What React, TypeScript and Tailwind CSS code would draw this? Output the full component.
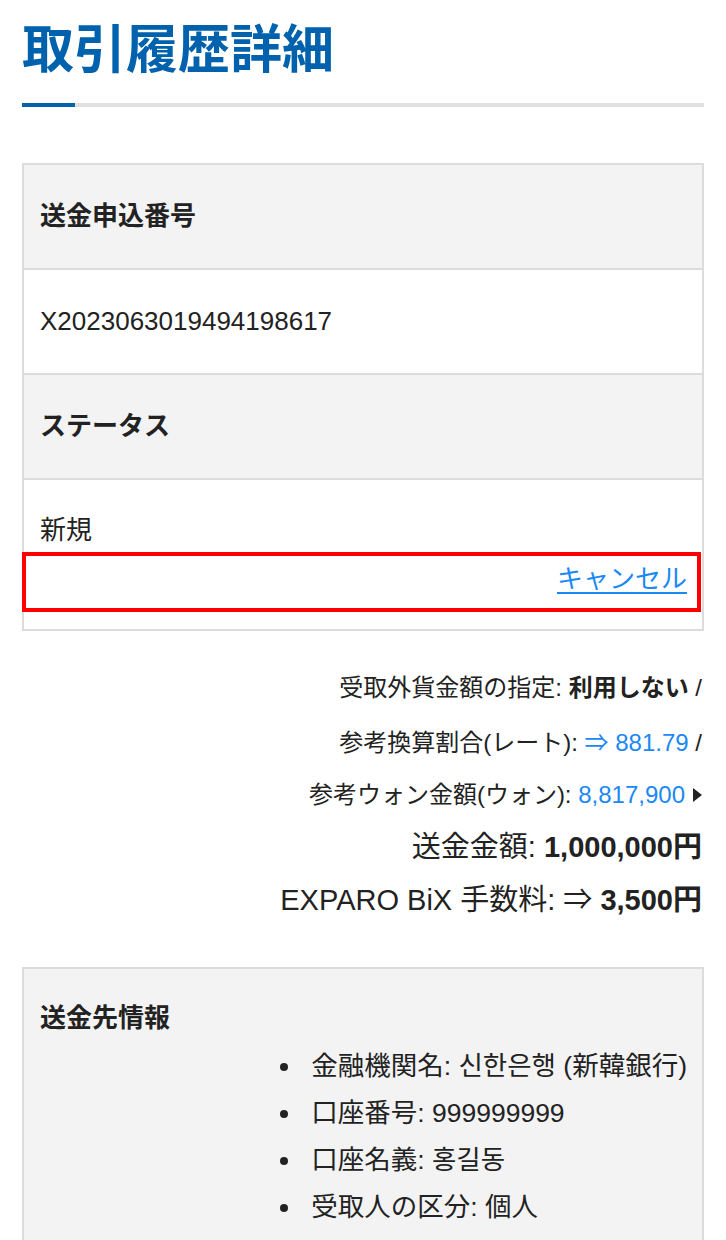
import React from 'react';

const recipient = [
  '金融機関名: 신한은행 (新韓銀行)',
  '口座番号: 999999999',
  '口座名義: 홍길동',
  '受取人の区分: 個人',
  '送金目的: 生活費の援助',
];

const HeaderRow = ({ label }: { label: string }) => (
  <div className="h-[105px] border-b-2 border-[#dcdcdc] bg-[#f3f3f3] flex items-center pl-[16px]">
    <span className="text-[26px] font-bold leading-[39px] text-[#222]">{label}</span>
  </div>
);

const ValueRow = ({ value }: { value: string }) => (
  <div className="h-[105px] border-b-2 border-[#dcdcdc] bg-white flex items-center pl-[16px]">
    <span className="text-[26px] leading-[39px] text-[#222]">{value}</span>
  </div>
);

export default function App() {
  return (
    <div className="min-h-[1240px] bg-white px-[22px] font-['Liberation_Sans','Noto_Sans_CJK_JP',sans-serif] text-[#222]">
      {/* page title */}
      <h1 className="pt-[20px] text-[52px] leading-[51px] font-bold text-[#0062ad] font-['Noto_Sans_CJK_JP',sans-serif]">
        取引履歴詳細
      </h1>
      <div className="mt-[32px] h-[4px] bg-[#e1e1e1] flex">
        <div className="w-[53px] h-full bg-[#0062ad]" />
      </div>

      {/* order card */}
      <div className="mt-[56px] border-x-2 border-t-2 border-[#dcdcdc]">
        <HeaderRow label="送金申込番号" />
        <ValueRow value="X2023063019494198617" />
        <HeaderRow label="ステータス" />
        <div className="border-b-2 border-[#dcdcdc] bg-white pt-[31px] pb-[17px]">
          <div className="pl-[16px] text-[26px] leading-[39px]">新規</div>
          <div className="mt-[2px] -ml-[2px] mr-[1px] h-[60px] border-4 border-[#ff0000] flex items-center justify-end pr-[10px] pb-[6px]">
            <a href="#" className="text-[26px] leading-[39px] text-[#1a88f5] underline underline-offset-[4px]">
              キャンセル
            </a>
          </div>
        </div>
      </div>

      {/* amounts summary */}
      <div className="mt-[29px] pr-[2px] text-right">
        <div className="text-[24px] leading-[55px]">
          受取外貨金額の指定: <span className="font-bold">利用しない</span> /
        </div>
        <div className="text-[24px] leading-[55px]">
          参考換算割合(レート): <span className="text-[#1a88f5]">⇒ 881.79</span> /
        </div>
        <div className="text-[24px] leading-[50px] flex items-center justify-end gap-[8px]">
          <span>
            参考ウォン金額(ウォン): <span className="text-[#1a88f5]">8,817,900</span>
          </span>
          <svg width="9" height="14" viewBox="0 0 9 14">
            <polygon points="0,0 9,7 0,14" fill="#222" />
          </svg>
        </div>
        <div className="text-[29px] leading-[54px]">
          送金金額: <span className="font-bold">1,000,000円</span>
        </div>
        <div className="text-[29px] leading-[52px]">
          EXPARO BiX 手数料: ⇒ <span className="font-bold">3,500円</span>
        </div>
      </div>

      {/* recipient card */}
      <div className="mt-[41px] border-2 border-[#dcdcdc] bg-[#f3f3f3] pt-[30px] pb-[40px] pl-[16px] pr-[15px]">
        <div className="text-[26px] font-bold leading-[39px]">送金先情報</div>
        <div className="mt-[5px] flex justify-end">
          <ul>
            {recipient.map((item, index) => (
              <li key={`${item}-${index}`} className="flex items-center gap-[23px] text-[26.5px] leading-[47px]">
                <span className="w-[8px] h-[8px] rounded-full bg-[#222]" />
                <span>{item}</span>
              </li>
            ))}
          </ul>
        </div>
      </div>
    </div>
  );
}
